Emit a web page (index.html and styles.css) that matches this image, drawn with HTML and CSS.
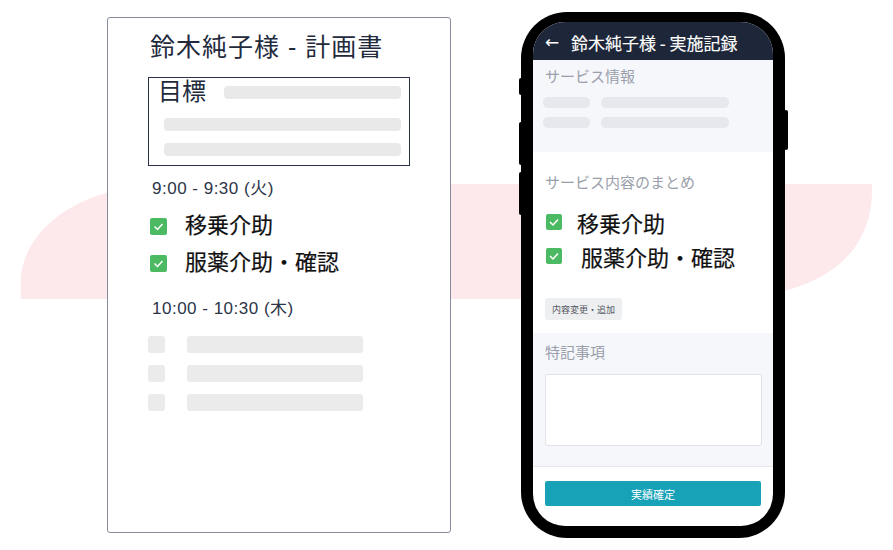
FILE: index.html
```html
<!DOCTYPE html>
<html lang="ja">
<head>
    <meta charset="utf-8">
    <title>計画書と実施記録</title>
    <link rel="stylesheet" href="styles.css">
</head>
<body>
    <div class="Stage">
        <svg class="Blob" width="893" height="550" viewBox="0 0 893 550">
            <path d="M20.7,299 V283 C20.7,230 80,184 170,184 H872 V190 C872,250 830,290 740,299 Z" fill="#fde8eb"/>
        </svg>

        <div class="Scene">
            <!-- plan sheet -->
            <div class="Sheet">
                <div class="SheetTitle">鈴木純子様 - 計画書</div>

                <div class="GoalBox">
                    <div class="GoalRow">
                        <span class="GoalLabel">目標</span>
                        <span class="Bar BarFirst"></span>
                    </div>
                    <span class="Bar"></span>
                    <span class="Bar"></span>
                </div>

                <div class="TimeLabel">9:00 - 9:30 (火)</div>
                <div class="CheckList">
                    <div class="CheckRow">
                        <span class="Check"><svg width="17" height="17" viewBox="0 0 17 17"><polyline points="4.5,8.5 7.5,11.5 12.5,6" fill="none" stroke="#fff" stroke-width="1.5"/></svg></span>
                        <span class="CheckText">移乗介助</span>
                    </div>
                    <div class="CheckRow">
                        <span class="Check"><svg width="17" height="17" viewBox="0 0 17 17"><polyline points="4.5,8.5 7.5,11.5 12.5,6" fill="none" stroke="#fff" stroke-width="1.5"/></svg></span>
                        <span class="CheckText">服薬介助・確認</span>
                    </div>
                </div>

                <div class="TimeLabel TimeLabelSecond">10:00 - 10:30 (木)</div>
                <div class="GhostList">
                    <div class="GhostRow"><span class="GhostBox"></span><span class="GhostBar"></span></div>
                    <div class="GhostRow"><span class="GhostBox"></span><span class="GhostBar"></span></div>
                    <div class="GhostRow"><span class="GhostBox"></span><span class="GhostBar"></span></div>
                </div>
            </div>

            <!-- phone -->
            <div class="Phone">
                <span class="SideKey KeyA"></span>
                <span class="SideKey KeyB"></span>
                <span class="SideKey KeyC"></span>
                <span class="SideKey KeyD"></span>

                <div class="Screen">
                    <div class="AppBar">
                        <span class="Back">←</span>
                        <span class="AppTitle">鈴木純子様 - 実施記録</span>
                    </div>

                    <div class="Section Tinted InfoSection">
                        <div class="SectionLabel">サービス情報</div>
                        <div class="InfoRow"><span class="InfoKey"></span><span class="InfoValue"></span></div>
                        <div class="InfoRow"><span class="InfoKey"></span><span class="InfoValue"></span></div>
                    </div>

                    <div class="Section SummarySection">
                        <div class="SectionLabel">サービス内容のまとめ</div>
                        <div class="PhoneChecks">
                            <div class="PhoneCheckRow">
                                <span class="Check CheckSmall"><svg width="16" height="16" viewBox="0 0 16 16"><polyline points="4,8 7,11 12,5.5" fill="none" stroke="#fff" stroke-width="1.5"/></svg></span>
                                <span class="PhoneCheckText">移乗介助</span>
                            </div>
                            <div class="PhoneCheckRow">
                                <span class="Check CheckSmall"><svg width="16" height="16" viewBox="0 0 16 16"><polyline points="4,8 7,11 12,5.5" fill="none" stroke="#fff" stroke-width="1.5"/></svg></span>
                                <span class="PhoneCheckText ShiftText">服薬介助・確認</span>
                            </div>
                        </div>
                        <button class="Chip">内容変更・追加</button>
                    </div>

                    <div class="Section Tinted NoteSection">
                        <div class="SectionLabel">特記事項</div>
                        <div class="NoteBox"></div>
                    </div>

                    <div class="Footer">
                        <button class="Confirm">実績確定</button>
                    </div>
                </div>
            </div>
        </div>
    </div>
</body>
</html>
```

FILE: styles.css
```css
body {
    margin: 0;
    background: #fff;
    font-family: 'Liberation Sans', 'Noto Sans CJK JP', sans-serif;
}

.Stage {
    position: relative;
    width: 893px;
    height: 550px;
    overflow: hidden;
}

.Blob {
    position: absolute;
    left: 0;
    top: 0;
}

.Scene {
    position: relative;
    display: flex;
    align-items: flex-start;
    gap: 70px;
    padding: 12px 0 0 107px;
}

/* plan sheet */

.Sheet {
    box-sizing: border-box;
    width: 344px;
    height: 516px;
    margin-top: 5px;
    padding: 14px 0 0 42px;
    background: #fff;
    border: 1px solid #868b9c;
    border-radius: 3px;
    color: #222a3c;
}

.SheetTitle {
    font-size: 25px;
    line-height: 30px;
    letter-spacing: 1px;
}

.GoalBox {
    box-sizing: border-box;
    display: flex;
    flex-direction: column;
    gap: 12px;
    width: 262px;
    height: 89px;
    margin: 15px 0 0 -2px;
    padding: 2px 8px 0 15px;
    border: 1px solid #2a3247;
}

.GoalRow {
    display: flex;
    align-items: center;
    gap: 18px;
    height: 24px;
    margin-bottom: 2px;
}

.GoalLabel {
    font-size: 24px;
    line-height: 24px;
    margin-left: -6px;
}

.Bar {
    display: block;
    height: 13px;
    background: #e9e9e9;
    border-radius: 4px;
}

.BarFirst {
    flex: 1;
}

.TimeLabel {
    margin: 13px 0 0 2px;
    font-size: 17px;
    line-height: 20px;
    letter-spacing: 0.5px;
    color: #2c3447;
}

.TimeLabelSecond {
    margin-top: 24px;
}

.CheckList {
    display: flex;
    flex-direction: column;
    gap: 13px;
    margin-top: 15px;
}

.CheckRow {
    display: flex;
    align-items: center;
    gap: 18px;
    height: 24px;
}

.Check {
    display: flex;
    width: 17px;
    height: 17px;
    background: #4cb963;
    border-radius: 2px;
}

.CheckText {
    font-size: 22px;
    color: #111;
    line-height: 24px;
    -webkit-text-stroke: 0.2px #111;
}

.GhostList {
    display: flex;
    flex-direction: column;
    gap: 12px;
    margin: 17px 0 0 -2px;
}

.GhostRow {
    display: flex;
    gap: 22px;
}

.GhostBox {
    width: 17px;
    height: 17px;
    background: #ebebeb;
    border-radius: 3px;
}

.GhostBar {
    width: 176px;
    height: 17px;
    background: #ebebeb;
    border-radius: 3px;
}

/* phone */

.Phone {
    position: relative;
    box-sizing: border-box;
    width: 264px;
    height: 526px;
    padding: 10px 12px 12px 12px;
    background: #000;
    border-radius: 46px;
}

.SideKey {
    position: absolute;
    width: 4px;
    background: #000;
    border-radius: 2px;
}

.KeyA { left: -2px; top: 66px; height: 17px; }
.KeyB { left: -2px; top: 110px; height: 43px; }
.KeyC { left: -2px; top: 160px; height: 43px; }
.KeyD { right: -3px; top: 98px; height: 40px; }

.Screen {
    display: flex;
    flex-direction: column;
    height: 504px;
    background: #fff;
    border-radius: 32px;
    overflow: hidden;
    font-family: 'Noto Sans CJK JP', sans-serif;
}

.AppBar {
    display: flex;
    align-items: center;
    height: 38px;
    padding: 2px 0 0 12px;
    box-sizing: border-box;
    background: #1e2639;
    color: #fff;
}

.Back {
    font-family: 'DejaVu Sans', sans-serif;
    font-size: 17px;
    width: 26px;
}

.AppTitle {
    font-size: 17px;
    -webkit-text-stroke: 0.15px #fff;
}

.Section {
    padding: 0 12px;
}

.Tinted {
    background: #f6f7fb;
}

.SectionLabel {
    font-size: 15px;
    line-height: 20px;
    color: #9a9fab;
}

.InfoSection {
    height: 92px;
    padding-top: 6px;
    box-sizing: border-box;
}

.InfoRow {
    display: flex;
    gap: 11px;
    margin: 0 0 9px -2px;
}

.SectionLabel + .InfoRow {
    margin-top: 11px;
}

.InfoKey {
    width: 47px;
    height: 11px;
    background: #e6e8ee;
    border-radius: 5px;
}

.InfoValue {
    width: 128px;
    height: 11px;
    background: #e6e8ee;
    border-radius: 5px;
}

.SummarySection {
    height: 181px;
    padding-top: 20px;
    box-sizing: border-box;
}

.PhoneChecks {
    display: flex;
    flex-direction: column;
    gap: 10px;
    margin-top: 18px;
}

.PhoneCheckRow {
    display: flex;
    align-items: center;
    gap: 15px;
    height: 24px;
    padding-left: 1px;
}

.CheckSmall {
    width: 16px;
    height: 16px;
}

.PhoneCheckText {
    font-size: 22px;
    color: #111;
    line-height: 24px;
    -webkit-text-stroke: 0.2px #111;
}

.ShiftText {
    margin-left: 4px;
}

.Chip {
    display: block;
    margin-top: 30px;
    width: 77px;
    height: 22px;
    padding: 0;
    border: none;
    border-radius: 3px;
    background: #eeeff1;
    color: #555a63;
    font-family: 'Noto Sans CJK JP', sans-serif;
    font-size: 9px;
}

.NoteSection {
    height: 134px;
    padding-top: 9px;
    box-sizing: border-box;
    border-bottom: 1px solid #e5e7eb;
}

.NoteBox {
    box-sizing: border-box;
    width: 217px;
    height: 72px;
    margin-top: 12px;
    background: #fff;
    border: 1px solid #e1e3e8;
    border-radius: 3px;
}

.Footer {
    padding: 14px 12px 0 12px;
}

.Confirm {
    display: block;
    width: 216px;
    height: 25px;
    padding: 0;
    border: none;
    border-radius: 2px;
    background: #18a2b8;
    color: #fff;
    font-family: 'Noto Sans CJK JP', sans-serif;
    font-size: 11px;
}
```
